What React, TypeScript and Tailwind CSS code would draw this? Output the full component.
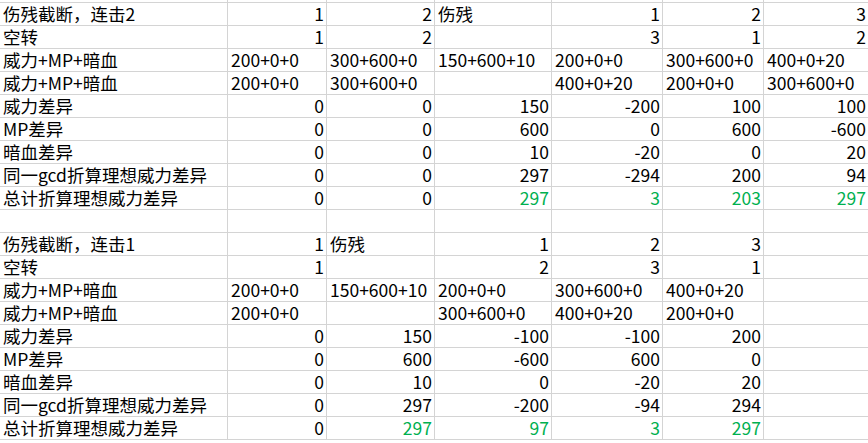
import React from 'react';

type Cell = string | { v: string; g?: boolean };

const widths = ['w-[228px]', 'w-[99px]', 'w-[108px]', 'w-[117px]', 'w-[111px]', 'w-[101px]', 'w-[105px]'];

// numbers align right, text and formulas align left
const isNum = (s: string) => /^-?\d+$/.test(s);

const g = (v: string): Cell => ({ v, g: true });

const rows: Cell[][] = [
  ['伤残截断，连击2', '1', '2', '伤残', '1', '2', '3'],
  ['空转', '1', '2', '', '3', '1', '2'],
  ['威力+MP+暗血', '200+0+0', '300+600+0', '150+600+10', '200+0+0', '300+600+0', '400+0+20'],
  ['威力+MP+暗血', '200+0+0', '300+600+0', '', '400+0+20', '200+0+0', '300+600+0'],
  ['威力差异', '0', '0', '150', '-200', '100', '100'],
  ['MP差异', '0', '0', '600', '0', '600', '-600'],
  ['暗血差异', '0', '0', '10', '-20', '0', '20'],
  ['同一gcd折算理想威力差异', '0', '0', '297', '-294', '200', '94'],
  ['总计折算理想威力差异', '0', '0', g('297'), g('3'), g('203'), g('297')],
  ['', '', '', '', '', '', ''],
  ['伤残截断，连击1', '1', '伤残', '1', '2', '3', ''],
  ['空转', '1', '', '2', '3', '1', ''],
  ['威力+MP+暗血', '200+0+0', '150+600+10', '200+0+0', '300+600+0', '400+0+20', ''],
  ['威力+MP+暗血', '200+0+0', '', '300+600+0', '400+0+20', '200+0+0', ''],
  ['威力差异', '0', '150', '-100', '-100', '200', ''],
  ['MP差异', '0', '600', '-600', '600', '0', ''],
  ['暗血差异', '0', '10', '0', '-20', '20', ''],
  ['同一gcd折算理想威力差异', '0', '297', '-200', '-94', '294', ''],
  ['总计折算理想威力差异', '0', g('297'), g('97'), g('3'), g('297'), ''],
];

function SheetCell({ cell, i }: { cell: Cell; i: number }) {
  const c = typeof cell === 'string' ? { v: cell } : cell;
  const right = isNum(c.v);
  return <div className={`${widths[i]} shrink-0 h-[22px] border-r border-[#d4d4d4] whitespace-nowrap ${right ? 'text-right pr-[2px]' : 'text-left pl-[3px]'} ${c.g ? 'text-[#00b050]' : 'text-black'}`}>
      {c.v}
    </div>;
}

export default function App() {
  return <div className="w-[868px] h-[443px] overflow-hidden bg-white text-[17.5px] leading-[22px]" style={{ fontFamily: '"Noto Sans CJK SC", "Noto Sans", sans-serif' }}>
      {/* sliver of the row above */}
      <div className="flex h-[3px] border-b border-[#d4d4d4]">
        {widths.map(w => <div key={w} className={`${w} shrink-0 h-[2px] border-r border-[#d4d4d4]`} />)}
      </div>
      {rows.map((r, ri) => <div key={ri} className="flex h-[23px] border-b border-[#d4d4d4]">
          {r.map((cell, ci) => <SheetCell key={ci} cell={cell} i={ci} />)}
        </div>)}
    </div>;
}
